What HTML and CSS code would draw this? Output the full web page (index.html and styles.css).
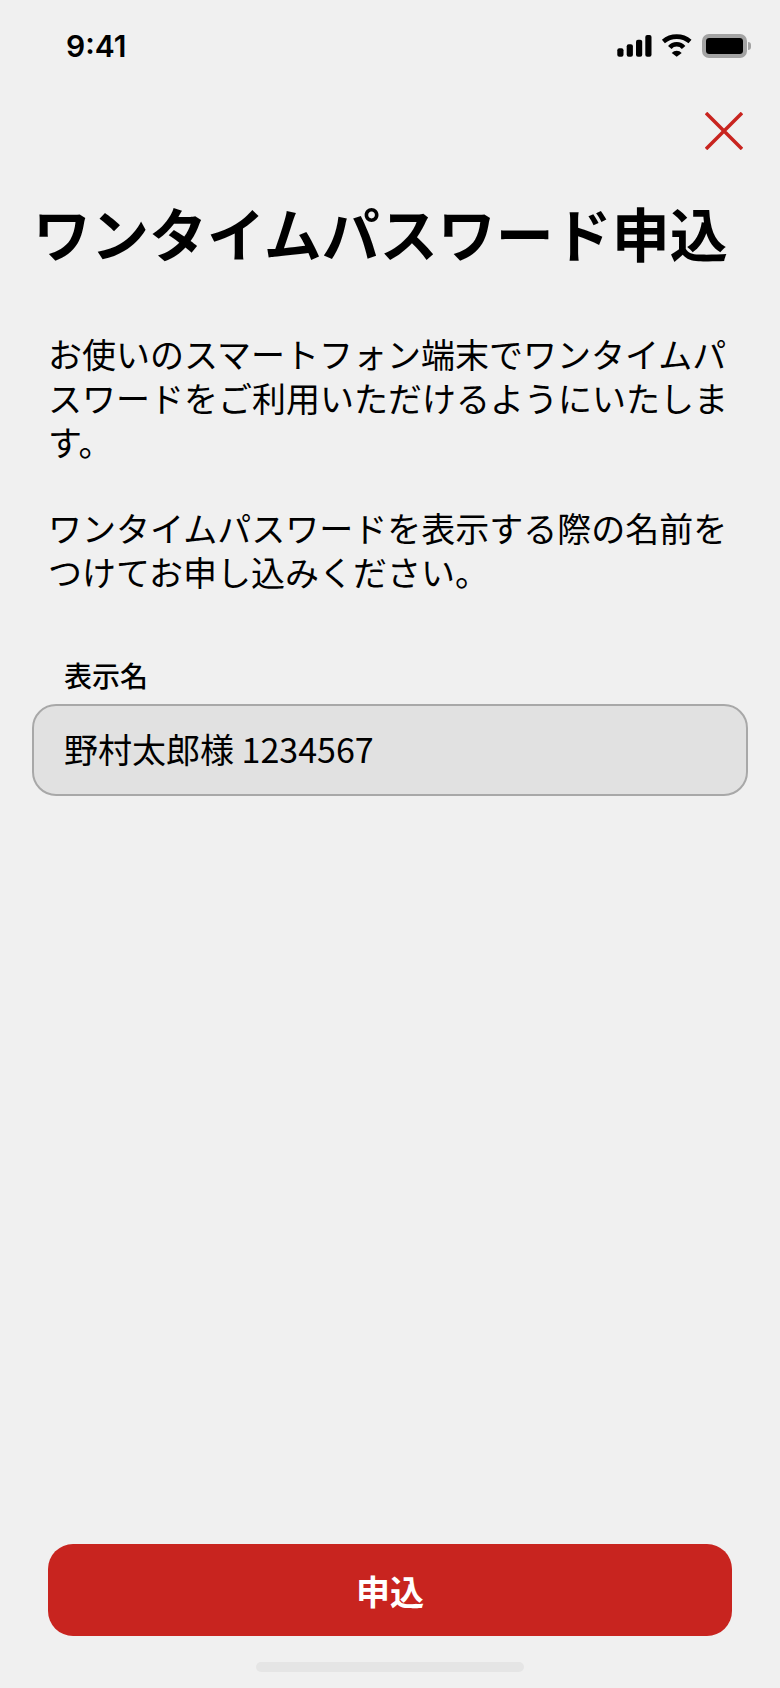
FILE: index.html
```html
<!DOCTYPE html>
<html lang="ja">
<head>
<meta charset="utf-8">
<title>ワンタイムパスワード申込</title>
<link rel="stylesheet" href="styles.css">
</head>
<body>
<div class="screen">
  <div class="status-bar">
    <span class="time">9:41</span>
    <div class="status-icons">
      <svg class="signal" width="36" height="23" viewBox="0 0 36 23"><rect x="1.300" y="14.300" width="6.200" height="8.400" rx="2"/><rect x="10.700" y="10.300" width="6.200" height="12.400" rx="2"/><rect x="20" y="5.700" width="6.200" height="17" rx="2"/><rect x="29.300" y="1" width="6.200" height="21.700" rx="2"/></svg>
      <svg class="wifi" width="32" height="23" viewBox="0 0 32 23"><path d="M2.400 7.500A20.500 20.500 0 0 1 29 7.500" fill="none" stroke="#000" stroke-width="4.600"/><path d="M8.800 13.500A9 9 0 0 1 22.600 13.500" fill="none" stroke="#000" stroke-width="4.600"/><path d="M15.700 22.700L10.700 18.900A7 7 0 0 1 20.700 18.900Z"/></svg>
      <div class="battery"><div class="battery-body"><div class="battery-fill"></div></div><div class="battery-nub"></div></div>
    </div>
  </div>
  <div class="close-row">
    <svg class="close" width="38" height="38" viewBox="0 0 38 38"><path d="M1 1l36 36M37 1L1 37" fill="none" stroke="#c8241f" stroke-width="3.500"/></svg>
  </div>
  <h1 class="title">ワンタイムパスワード申込</h1>
  <div class="intro">
    <p>お使いのスマートフォン端末でワンタイムパスワードをご利用いただけるようにいたします。</p>
    <p>ワンタイムパスワードを表示する際の名前をつけてお申し込みください。</p>
  </div>
  <label class="field-label">表示名</label>
  <div class="field">野村太郎様 1234567</div>
  <div class="footer">
    <button class="submit">申込</button>
    <div class="home-bar"></div>
  </div>
</div>
</body>
</html>
```
FILE: styles.css
```css
* { box-sizing: border-box; }
html, body { margin: 0; padding: 0; }
body {
  background: #f0f0f0;
  font-family: "Noto Sans CJK JP", "Noto Sans", sans-serif;
  color: #000;
}
.screen {
  width: 780px;
  height: 1688px;
  display: flex;
  flex-direction: column;
  overflow: hidden;
}
.status-bar {
  height: 112px;
  padding: 34px 29px 0 66px;
  display: flex;
  justify-content: space-between;
  align-items: flex-start;
}
.time {
  font-family: Inter, "Liberation Sans", sans-serif;
  font-weight: 600;
  font-size: 30px;
  line-height: 24px;
}
.status-icons { display: flex; align-items: flex-start; gap: 9px; }
.battery { display: flex; align-items: center; gap: 1px; }
.battery-body {
  width: 45px;
  height: 24px;
  border: 4px solid #a3a3a3;
  border-radius: 7px;
}
.battery-fill { width: 100%; height: 100%; background: #000; border-radius: 3px; }
.battery-nub { width: 3px; height: 8px; background: #a3a3a3; border-radius: 0 3px 3px 0; }
.close-row {
  display: flex;
  justify-content: flex-end;
  padding-right: 37px;
  height: 38px;
}
.title {
  margin: 50px 0 0 33px;
  font-size: 58px;
  font-weight: 700;
  line-height: 64px;
  white-space: nowrap;
}
.intro {
  margin: 68px 44px 0 48px;
  font-size: 34px;
  line-height: 44px;
}
.intro p { margin: 0 0 42px; }
.field-label {
  margin: 21px 0 0 64px;
  font-size: 28px;
  font-weight: 500;
  line-height: 36px;
}
.field {
  margin: 11px 32px 0;
  height: 92px;
  padding: 0 0 3px 30px;
  display: flex;
  align-items: center;
  background: #e1e1e1;
  border: 2px solid #a8a8a8;
  border-radius: 24px;
  font-size: 34px;
}
.footer {
  margin-top: auto;
  padding: 0 48px 16px;
  display: flex;
  flex-direction: column;
  align-items: center;
}
.submit {
  width: 100%;
  height: 92px;
  border: 0;
  border-radius: 25px;
  background: #c8241f;
  color: #fff;
  font-family: inherit;
  font-size: 34px;
  font-weight: 700;
}
.home-bar {
  margin-top: 26px;
  width: 268px;
  height: 10px;
  border-radius: 5px;
  background: #e5e5e5;
}
```
